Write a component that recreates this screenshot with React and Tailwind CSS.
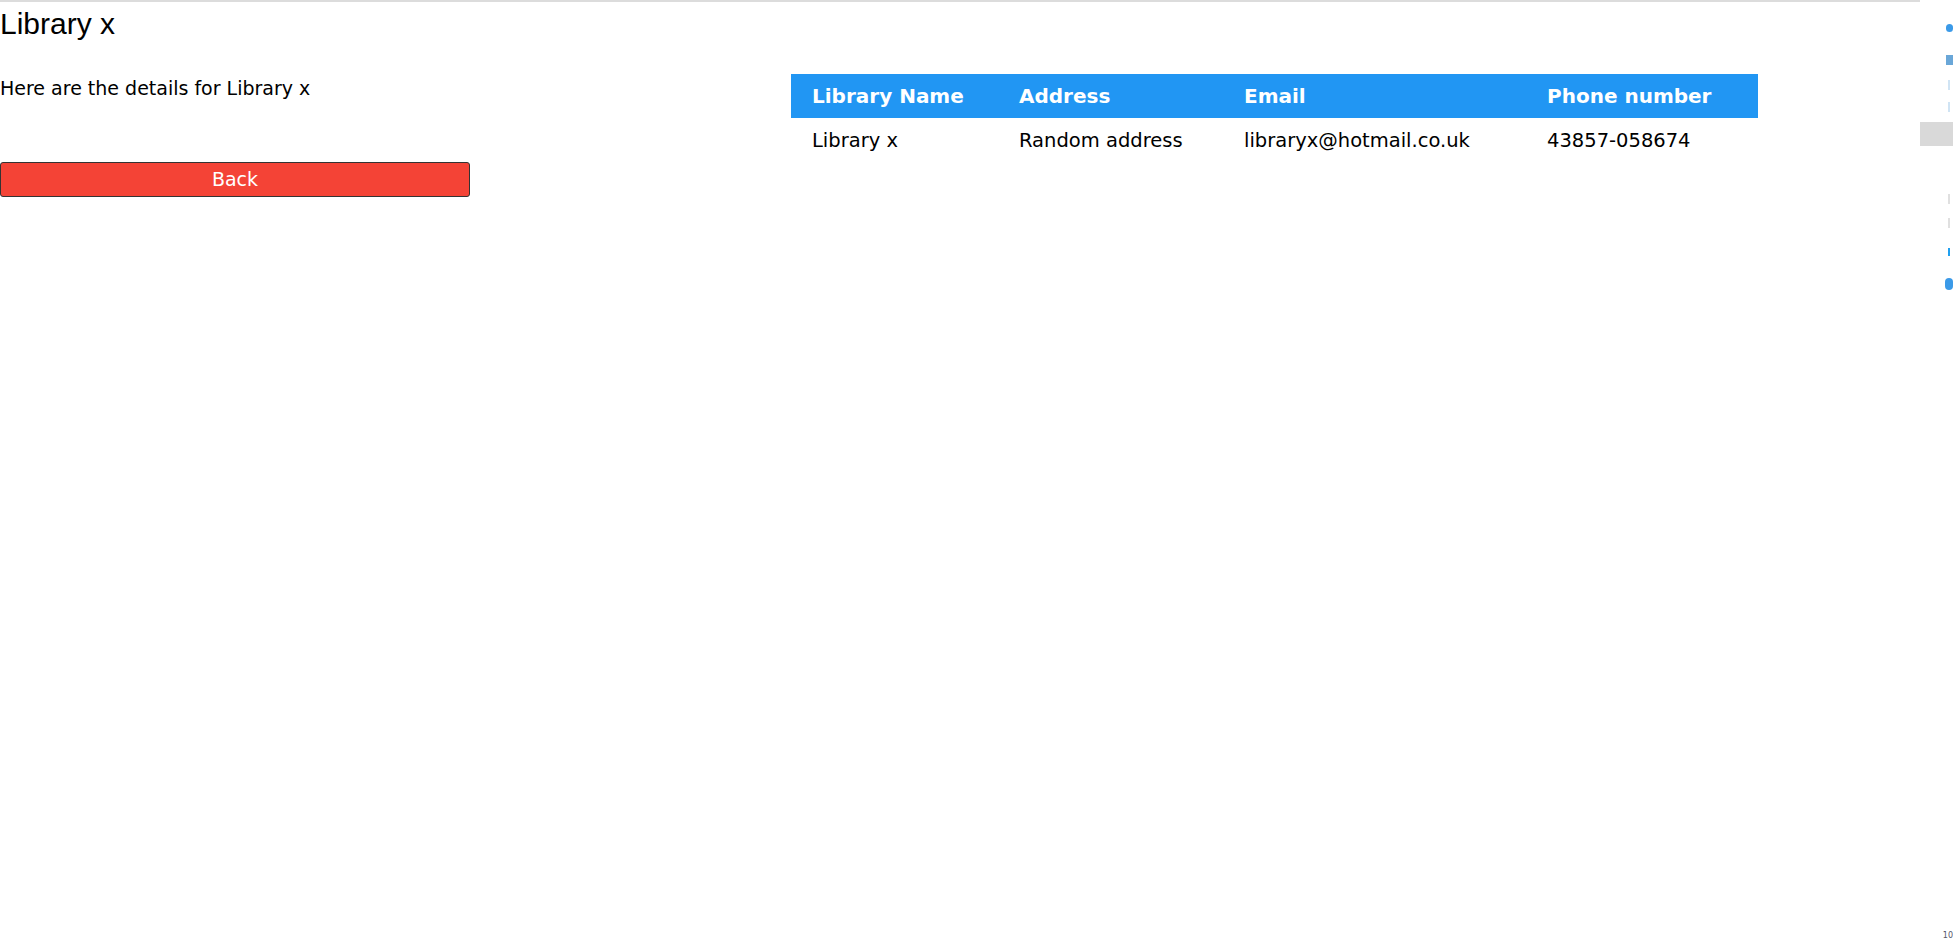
import React from 'react';

const body = { fontFamily: '"DejaVu Sans", Verdana, sans-serif' };

function SideStrip() {
  // sliver of a neighbouring window's toolbar at the right edge
  return (
    <div className="w-[33px] shrink-0 flex flex-col items-end pt-[24px]">
      <div className="w-[7px] h-[8px] bg-[#3b9ae8] rounded-sm" />
      <div className="w-[7px] h-[10px] bg-[#6aa7d8] mt-[23px]" />
      <div className="w-[2px] h-[10px] bg-[#d0e4f4] mt-[15px] mr-[3px]" />
      <div className="w-[2px] h-[10px] bg-[#d0e4f4] mt-[12px] mr-[3px]" />
      <div className="w-[33px] h-[24px] bg-[#d9d9d9] mt-[10px]" />
      <div className="w-[2px] h-[10px] bg-[#e0e0e0] mt-[48px] mr-[3px]" />
      <div className="w-[2px] h-[10px] bg-[#e0e0e0] mt-[14px] mr-[3px]" />
      <div className="w-[2px] h-[8px] bg-[#20a0f0] mt-[20px] mr-[3px]" />
      <div className="w-[8px] h-[12px] bg-[#3b9ae8] rounded-sm mt-[22px]" />
      <div className="mt-auto text-[8px] leading-[9px] text-[#556] pb-[1px]">10</div>
    </div>
  );
}

export default function App() {
  return (
    <div className="flex min-h-screen bg-white text-black" style={body}>
      <div className="w-[1920px] shrink-0 border-t-2 border-[#dcdcdc]">
        <h1 className="text-[30px] leading-[40px] pt-[2px]" style={{ fontFamily: '"Liberation Sans", Arial, sans-serif' }}>
          Library x
        </h1>
        <div className="flex items-start mt-[30px]">
          <div className="w-[791px] shrink-0">
            <p className="text-[19px] leading-[24px] mt-[2px]">Here are the details for Library x</p>
            <button className="mt-[62px] w-[470px] h-[35px] bg-[#f44336] border border-[#333] rounded-[3px] text-white text-[19px]">
              Back
            </button>
          </div>
          <table className="w-[967px] border-collapse">
            <thead>
              <tr className="bg-[#2196f3] text-white h-[44px] text-[20px]">
                <th className="w-[208px] pl-[21px] text-left font-bold">Library Name</th>
                <th className="w-[225px] pl-[20px] text-left font-bold">Address</th>
                <th className="w-[303px] pl-[20px] text-left font-bold">Email</th>
                <th className="pl-[20px] text-left font-bold">Phone number</th>
              </tr>
            </thead>
            <tbody>
              <tr className="h-[46px] text-[19.5px]">
                <td className="pl-[21px]">Library x</td>
                <td className="pl-[20px]">Random address</td>
                <td className="pl-[20px]">libraryx@hotmail.co.uk</td>
                <td className="pl-[20px]">43857-058674</td>
              </tr>
            </tbody>
          </table>
        </div>
      </div>
      <SideStrip />
    </div>
  );
}
